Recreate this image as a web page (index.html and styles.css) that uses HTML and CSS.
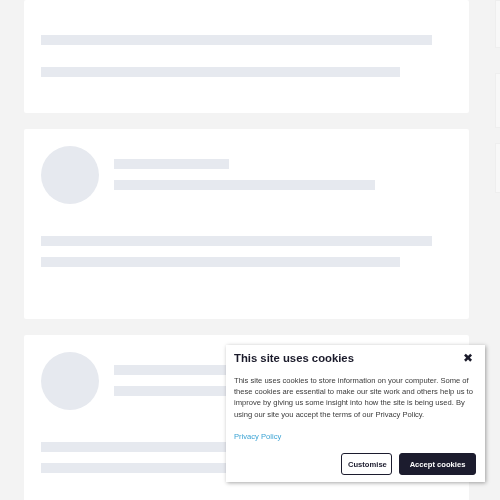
FILE: index.html
```html
<!DOCTYPE html>
<html lang="en">
<head>
  <meta charset="UTF-8">
  <meta name="viewport" content="width=device-width, initial-scale=1.0">
  <title>Feed</title>
  <link rel="stylesheet" href="styles.css">
</head>
<body>
  <div class="page">
    <div class="feed">
      <div class="card card-short">
        <div class="line line-long"></div>
        <div class="line line-mid"></div>
      </div>
      <div class="card">
        <div class="card-head">
          <div class="avatar"></div>
          <div class="head-lines">
            <div class="line line-title"></div>
            <div class="line line-sub"></div>
          </div>
        </div>
        <div class="card-body">
          <div class="line line-long"></div>
          <div class="line line-mid"></div>
        </div>
      </div>
      <div class="card">
        <div class="card-head">
          <div class="avatar"></div>
          <div class="head-lines">
            <div class="line line-title"></div>
            <div class="line line-sub"></div>
          </div>
        </div>
        <div class="card-body">
          <div class="line line-long"></div>
          <div class="line line-mid"></div>
        </div>
      </div>
    </div>
    <div class="side">
      <div class="side-box side-box-a"></div>
      <div class="side-box side-box-b"></div>
      <div class="side-box side-box-c"></div>
    </div>
  </div>

  <div class="cookie-popup">
    <div class="cookie-head">
      <h2>This site uses cookies</h2>
      <span class="cookie-close">&#10006;</span>
    </div>
    <p>This site uses cookies to store information on your computer. Some of these cookies are essential to make our site work and others help us to improve by giving us some insight into how the site is being used. By using our site you accept the terms of our Privacy Policy.</p>
    <a href="#" class="cookie-link">Privacy Policy</a>
    <div class="cookie-actions">
      <button class="btn btn-outline">Customise</button>
      <button class="btn btn-dark">Accept cookies</button>
    </div>
  </div>
</body>
</html>
```

FILE: styles.css
```css
body {
  font-family: "Liberation Sans", Arial, sans-serif;
  margin: 0;
  padding: 0;
  background-color: #f3f3f3;
  overflow: hidden;
}
.page {
  display: flex;
  gap: 26px;
  padding-left: 24px;
}
.feed {
  width: 445px;
  flex-shrink: 0;
  display: flex;
  flex-direction: column;
  gap: 16px;
}
.card {
  background-color: #fff;
  border-radius: 2px;
  padding: 17px 37px 54px 17px;
  height: 190px;
  box-sizing: border-box;
}
.card-short {
  height: 113px;
  padding-top: 35px;
}
.card-short .line + .line {
  margin-top: 22px;
}
.line {
  height: 10px;
  background-color: #e6e9ef;
}
.line-long {
  width: 391px;
}
.line-mid {
  width: 359px;
}
.card-head {
  display: flex;
  gap: 15px;
}
.avatar {
  width: 58px;
  height: 58px;
  border-radius: 50%;
  background-color: #e6e9ef;
  flex-shrink: 0;
}
.head-lines {
  padding-top: 13px;
}
.line-title {
  width: 115px;
}
.line-sub {
  width: 261px;
  margin-top: 11px;
}
.card-body {
  margin-top: 32px;
}
.card-body .line + .line {
  margin-top: 11px;
}
.side {
  flex-shrink: 0;
  width: 100px;
  display: flex;
  flex-direction: column;
}
.side-box {
  background-color: #f8f8f8;
  border: 1px solid #eee;
  box-sizing: border-box;
}
.side-box-a {
  height: 48px;
}
.side-box-b {
  height: 55px;
  margin-top: 25px;
}
.side-box-c {
  height: 50px;
  margin-top: 15px;
}
.cookie-popup {
  position: fixed;
  right: 15px;
  bottom: 18px;
  width: 259px;
  box-sizing: border-box;
  background-color: #fff;
  padding: 7px 9px 7px 8px;
  box-shadow: 1px 1px 4px rgba(0, 0, 0, 0.35);
  color: #3a3a3a;
}
.cookie-head {
  display: flex;
  justify-content: space-between;
  align-items: center;
}
.cookie-head h2 {
  margin: 0;
  font-size: 11.3px;
  line-height: 13px;
  color: #1a1a2a;
}
.cookie-close {
  font-size: 12px;
  line-height: 13px;
  color: #1a1a2a;
  margin-right: 3px;
}
.cookie-popup p {
  margin: 10px 0 0;
  font-size: 7.6px;
  line-height: 11.3px;
}
.cookie-link {
  display: block;
  margin-top: 12px;
  font-size: 7.6px;
  color: #3ba3d4;
  text-decoration: none;
}
.cookie-actions {
  display: flex;
  justify-content: flex-end;
  gap: 7px;
  margin-top: 12px;
}
.btn {
  font-family: "Liberation Sans", Arial, sans-serif;
  font-size: 7.6px;
  font-weight: bold;
  height: 22px;
  border-radius: 3px;
  padding: 0 6px;
}
.btn-outline {
  background-color: #fff;
  border: 1px solid #1c1c2e;
  color: #1c1c2e;
  width: 51px;
}
.btn-dark {
  background-color: #1c1c2e;
  border: 1px solid #1c1c2e;
  color: #fff;
  width: 77px;
}
```
